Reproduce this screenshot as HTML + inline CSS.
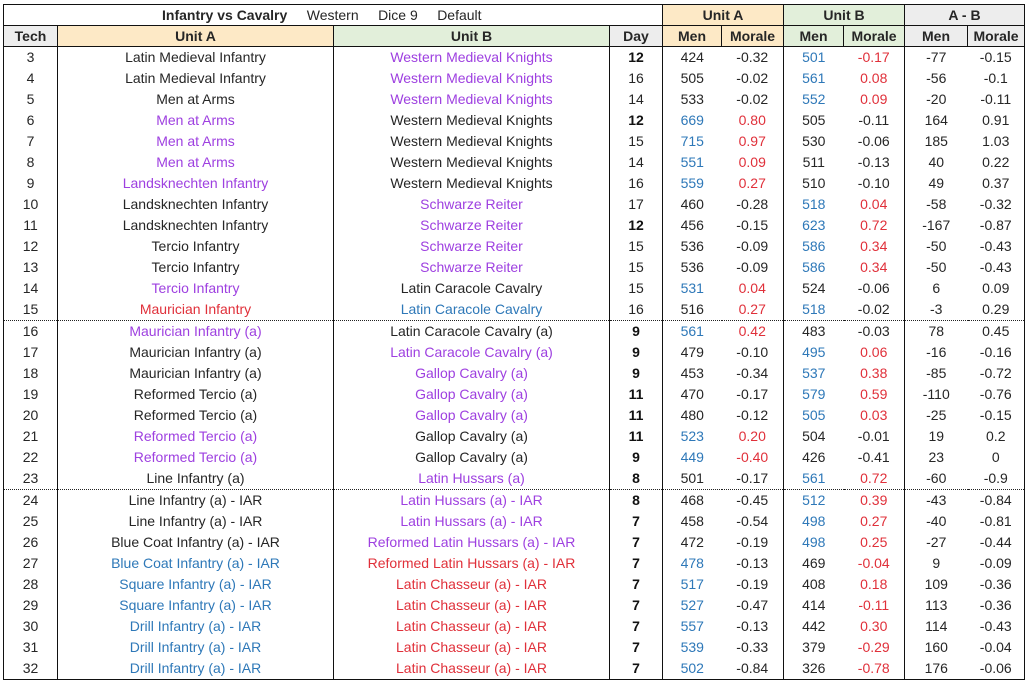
<!DOCTYPE html>
<html><head><meta charset="utf-8"><style>
html,body{margin:0;padding:0;background:#fff;width:1029px;height:679px;overflow:hidden}
table{position:absolute;left:3px;top:4px;border-collapse:collapse;table-layout:fixed;font-family:"Liberation Sans",sans-serif;font-size:14px;color:#262626}
tr{height:21px}
td{height:21px;padding:0;text-align:center;white-space:nowrap;overflow:hidden;line-height:21px}
.vl{border-left:1.5px solid #111}
.hd td{font-weight:bold;border:1.5px solid #111;height:20px;line-height:20px}
.ti td{height:20px;line-height:20px}
.p{color:#9e40e0}.b{color:#2e78b8}.r{color:#e0303a}
.d{font-weight:bold;color:#111}
.dot td{border-bottom:1.5px dotted #222}
.last td{border-bottom:1.5px solid #111}
</style></head><body>
<table>
<colgroup><col style="width:54px"><col style="width:276px"><col style="width:276px"><col style="width:53px"><col style="width:59px"><col style="width:62px"><col style="width:60px"><col style="width:61px"><col style="width:63px"><col style="width:57px"></colgroup>
<tr class="ti"><td colspan="4" style="border:1.5px solid #111;border-right:none;text-align:left;padding-left:158px;font-weight:normal"><b>Infantry vs Cavalry</b>&nbsp;&nbsp;&nbsp;&nbsp;&nbsp;Western&nbsp;&nbsp;&nbsp;&nbsp;&nbsp;Dice 9&nbsp;&nbsp;&nbsp;&nbsp;&nbsp;Default</td><td colspan="2" style="background:#fde9c6;border:1.5px solid #111;font-weight:bold">Unit A</td><td colspan="2" style="background:#e2efda;border:1.5px solid #111;font-weight:bold">Unit B</td><td colspan="2" style="background:#ededed;border:1.5px solid #111;font-weight:bold">A - B</td></tr>
<tr class="hd"><td style="background:#ededed">Tech</td><td style="background:#fde9c6">Unit A</td><td style="background:#e2efda">Unit B</td><td style="background:#ededed">Day</td><td style="background:#fde9c6">Men</td><td style="background:#fde9c6">Morale</td><td style="background:#e2efda">Men</td><td style="background:#e2efda">Morale</td><td style="background:#ededed">Men</td><td style="background:#ededed">Morale</td></tr>
<tr><td class="vl">3</td><td class="vl">Latin Medieval Infantry</td><td class="vl p">Western Medieval Knights</td><td class="vl d">12</td><td class="vl">424</td><td>-0.32</td><td class="vl b">501</td><td class="r">-0.17</td><td class="vl">-77</td><td style="border-right:1.5px solid #111">-0.15</td></tr>
<tr><td class="vl">4</td><td class="vl">Latin Medieval Infantry</td><td class="vl p">Western Medieval Knights</td><td class="vl">16</td><td class="vl">505</td><td>-0.02</td><td class="vl b">561</td><td class="r">0.08</td><td class="vl">-56</td><td style="border-right:1.5px solid #111">-0.1</td></tr>
<tr><td class="vl">5</td><td class="vl">Men at Arms</td><td class="vl p">Western Medieval Knights</td><td class="vl">14</td><td class="vl">533</td><td>-0.02</td><td class="vl b">552</td><td class="r">0.09</td><td class="vl">-20</td><td style="border-right:1.5px solid #111">-0.11</td></tr>
<tr><td class="vl">6</td><td class="vl p">Men at Arms</td><td class="vl">Western Medieval Knights</td><td class="vl d">12</td><td class="vl b">669</td><td class="r">0.80</td><td class="vl">505</td><td>-0.11</td><td class="vl">164</td><td style="border-right:1.5px solid #111">0.91</td></tr>
<tr><td class="vl">7</td><td class="vl p">Men at Arms</td><td class="vl">Western Medieval Knights</td><td class="vl">15</td><td class="vl b">715</td><td class="r">0.97</td><td class="vl">530</td><td>-0.06</td><td class="vl">185</td><td style="border-right:1.5px solid #111">1.03</td></tr>
<tr><td class="vl">8</td><td class="vl p">Men at Arms</td><td class="vl">Western Medieval Knights</td><td class="vl">14</td><td class="vl b">551</td><td class="r">0.09</td><td class="vl">511</td><td>-0.13</td><td class="vl">40</td><td style="border-right:1.5px solid #111">0.22</td></tr>
<tr><td class="vl">9</td><td class="vl p">Landsknechten Infantry</td><td class="vl">Western Medieval Knights</td><td class="vl">16</td><td class="vl b">559</td><td class="r">0.27</td><td class="vl">510</td><td>-0.10</td><td class="vl">49</td><td style="border-right:1.5px solid #111">0.37</td></tr>
<tr><td class="vl">10</td><td class="vl">Landsknechten Infantry</td><td class="vl p">Schwarze Reiter</td><td class="vl">17</td><td class="vl">460</td><td>-0.28</td><td class="vl b">518</td><td class="r">0.04</td><td class="vl">-58</td><td style="border-right:1.5px solid #111">-0.32</td></tr>
<tr><td class="vl">11</td><td class="vl">Landsknechten Infantry</td><td class="vl p">Schwarze Reiter</td><td class="vl d">12</td><td class="vl">456</td><td>-0.15</td><td class="vl b">623</td><td class="r">0.72</td><td class="vl">-167</td><td style="border-right:1.5px solid #111">-0.87</td></tr>
<tr><td class="vl">12</td><td class="vl">Tercio Infantry</td><td class="vl p">Schwarze Reiter</td><td class="vl">15</td><td class="vl">536</td><td>-0.09</td><td class="vl b">586</td><td class="r">0.34</td><td class="vl">-50</td><td style="border-right:1.5px solid #111">-0.43</td></tr>
<tr><td class="vl">13</td><td class="vl">Tercio Infantry</td><td class="vl p">Schwarze Reiter</td><td class="vl">15</td><td class="vl">536</td><td>-0.09</td><td class="vl b">586</td><td class="r">0.34</td><td class="vl">-50</td><td style="border-right:1.5px solid #111">-0.43</td></tr>
<tr><td class="vl">14</td><td class="vl p">Tercio Infantry</td><td class="vl">Latin Caracole Cavalry</td><td class="vl">15</td><td class="vl b">531</td><td class="r">0.04</td><td class="vl">524</td><td>-0.06</td><td class="vl">6</td><td style="border-right:1.5px solid #111">0.09</td></tr>
<tr class="dot"><td class="vl">15</td><td class="vl r">Maurician Infantry</td><td class="vl b">Latin Caracole Cavalry</td><td class="vl">16</td><td class="vl">516</td><td class="r">0.27</td><td class="vl b">518</td><td>-0.02</td><td class="vl">-3</td><td style="border-right:1.5px solid #111">0.29</td></tr>
<tr><td class="vl">16</td><td class="vl p">Maurician Infantry (a)</td><td class="vl">Latin Caracole Cavalry (a)</td><td class="vl d">9</td><td class="vl b">561</td><td class="r">0.42</td><td class="vl">483</td><td>-0.03</td><td class="vl">78</td><td style="border-right:1.5px solid #111">0.45</td></tr>
<tr><td class="vl">17</td><td class="vl">Maurician Infantry (a)</td><td class="vl p">Latin Caracole Cavalry (a)</td><td class="vl d">9</td><td class="vl">479</td><td>-0.10</td><td class="vl b">495</td><td class="r">0.06</td><td class="vl">-16</td><td style="border-right:1.5px solid #111">-0.16</td></tr>
<tr><td class="vl">18</td><td class="vl">Maurician Infantry (a)</td><td class="vl p">Gallop Cavalry (a)</td><td class="vl d">9</td><td class="vl">453</td><td>-0.34</td><td class="vl b">537</td><td class="r">0.38</td><td class="vl">-85</td><td style="border-right:1.5px solid #111">-0.72</td></tr>
<tr><td class="vl">19</td><td class="vl">Reformed Tercio (a)</td><td class="vl p">Gallop Cavalry (a)</td><td class="vl d">11</td><td class="vl">470</td><td>-0.17</td><td class="vl b">579</td><td class="r">0.59</td><td class="vl">-110</td><td style="border-right:1.5px solid #111">-0.76</td></tr>
<tr><td class="vl">20</td><td class="vl">Reformed Tercio (a)</td><td class="vl p">Gallop Cavalry (a)</td><td class="vl d">11</td><td class="vl">480</td><td>-0.12</td><td class="vl b">505</td><td class="r">0.03</td><td class="vl">-25</td><td style="border-right:1.5px solid #111">-0.15</td></tr>
<tr><td class="vl">21</td><td class="vl p">Reformed Tercio (a)</td><td class="vl">Gallop Cavalry (a)</td><td class="vl d">11</td><td class="vl b">523</td><td class="r">0.20</td><td class="vl">504</td><td>-0.01</td><td class="vl">19</td><td style="border-right:1.5px solid #111">0.2</td></tr>
<tr><td class="vl">22</td><td class="vl p">Reformed Tercio (a)</td><td class="vl">Gallop Cavalry (a)</td><td class="vl d">9</td><td class="vl b">449</td><td class="r">-0.40</td><td class="vl">426</td><td>-0.41</td><td class="vl">23</td><td style="border-right:1.5px solid #111">0</td></tr>
<tr class="dot"><td class="vl">23</td><td class="vl">Line Infantry (a)</td><td class="vl p">Latin Hussars (a)</td><td class="vl d">8</td><td class="vl">501</td><td>-0.17</td><td class="vl b">561</td><td class="r">0.72</td><td class="vl">-60</td><td style="border-right:1.5px solid #111">-0.9</td></tr>
<tr><td class="vl">24</td><td class="vl">Line Infantry (a) - IAR</td><td class="vl p">Latin Hussars (a) - IAR</td><td class="vl d">8</td><td class="vl">468</td><td>-0.45</td><td class="vl b">512</td><td class="r">0.39</td><td class="vl">-43</td><td style="border-right:1.5px solid #111">-0.84</td></tr>
<tr><td class="vl">25</td><td class="vl">Line Infantry (a) - IAR</td><td class="vl p">Latin Hussars (a) - IAR</td><td class="vl d">7</td><td class="vl">458</td><td>-0.54</td><td class="vl b">498</td><td class="r">0.27</td><td class="vl">-40</td><td style="border-right:1.5px solid #111">-0.81</td></tr>
<tr><td class="vl">26</td><td class="vl">Blue Coat Infantry (a) - IAR</td><td class="vl p">Reformed Latin Hussars (a) - IAR</td><td class="vl d">7</td><td class="vl">472</td><td>-0.19</td><td class="vl b">498</td><td class="r">0.25</td><td class="vl">-27</td><td style="border-right:1.5px solid #111">-0.44</td></tr>
<tr><td class="vl">27</td><td class="vl b">Blue Coat Infantry (a) - IAR</td><td class="vl r">Reformed Latin Hussars (a) - IAR</td><td class="vl d">7</td><td class="vl b">478</td><td>-0.13</td><td class="vl">469</td><td class="r">-0.04</td><td class="vl">9</td><td style="border-right:1.5px solid #111">-0.09</td></tr>
<tr><td class="vl">28</td><td class="vl b">Square Infantry (a) - IAR</td><td class="vl r">Latin Chasseur (a) - IAR</td><td class="vl d">7</td><td class="vl b">517</td><td>-0.19</td><td class="vl">408</td><td class="r">0.18</td><td class="vl">109</td><td style="border-right:1.5px solid #111">-0.36</td></tr>
<tr><td class="vl">29</td><td class="vl b">Square Infantry (a) - IAR</td><td class="vl r">Latin Chasseur (a) - IAR</td><td class="vl d">7</td><td class="vl b">527</td><td>-0.47</td><td class="vl">414</td><td class="r">-0.11</td><td class="vl">113</td><td style="border-right:1.5px solid #111">-0.36</td></tr>
<tr><td class="vl">30</td><td class="vl b">Drill Infantry (a) - IAR</td><td class="vl r">Latin Chasseur (a) - IAR</td><td class="vl d">7</td><td class="vl b">557</td><td>-0.13</td><td class="vl">442</td><td class="r">0.30</td><td class="vl">114</td><td style="border-right:1.5px solid #111">-0.43</td></tr>
<tr><td class="vl">31</td><td class="vl b">Drill Infantry (a) - IAR</td><td class="vl r">Latin Chasseur (a) - IAR</td><td class="vl d">7</td><td class="vl b">539</td><td>-0.33</td><td class="vl">379</td><td class="r">-0.29</td><td class="vl">160</td><td style="border-right:1.5px solid #111">-0.04</td></tr>
<tr class="last"><td class="vl">32</td><td class="vl b">Drill Infantry (a) - IAR</td><td class="vl r">Latin Chasseur (a) - IAR</td><td class="vl d">7</td><td class="vl b">502</td><td>-0.84</td><td class="vl">326</td><td class="r">-0.78</td><td class="vl">176</td><td style="border-right:1.5px solid #111">-0.06</td></tr>
</table>
</body></html>
